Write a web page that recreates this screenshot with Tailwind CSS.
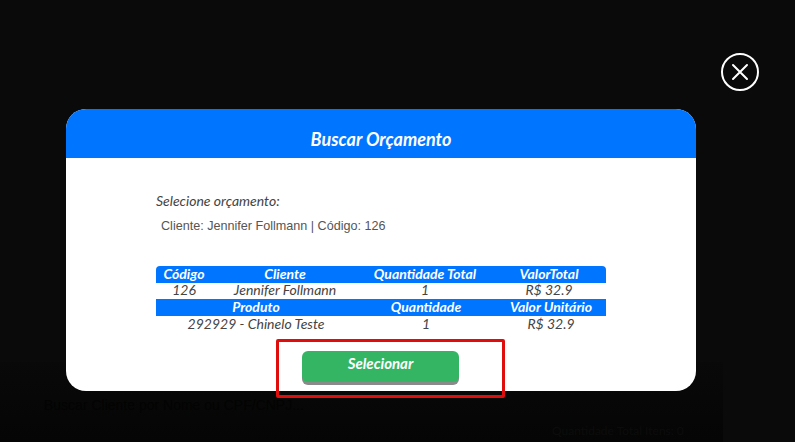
<!DOCTYPE html>
<html>

<head>
  <title>Buscar Orçamento</title>
  <script src="https://cdn.jsdelivr.net/npm/@tailwindcss/browser@4"></script>
</head>

<body class="bg-[#0a0a0a] font-['Lato',sans-serif]">
  <div class="relative w-[795px] h-[442px] overflow-hidden">
    <!-- page behind the overlay -->
    <div class="pt-[362px] h-full">
      <div class="relative h-[80px] w-[723px] bg-gradient-to-b from-[#090909] to-[#050505]">
        <p class="pl-[44px] pt-[34px] text-[14px] leading-[18px] text-[#030303] font-['Liberation_Sans',sans-serif]">Buscar Cliente por Nome ou CPF/CNPJ...</p>
        <p class="absolute left-[552px] top-[61px] text-[12px] leading-[16px] text-[#0c0c0c]">Quantidade Total Itens: 0</p>
      </div>
    </div>

    <!-- close button -->
    <button class="absolute left-[721px] top-[53px] w-[38px] h-[38px] rounded-full border-[2px] border-white flex items-center justify-center">
      <svg class="w-[20px] h-[20px]" viewBox="0 0 20 20" fill="none" stroke="white" stroke-width="2" stroke-linecap="round">
        <path d="M3 3l14 14M17 3L3 17"></path>
      </svg>
    </button>

    <!-- modal -->
    <div class="absolute left-[66px] top-[109px] w-[630px] h-[282px] bg-white rounded-[20px] overflow-hidden">
      <h2 class="h-[49px] bg-[#0075ff] flex items-center justify-center pt-[12px] text-white text-[18px] font-bold italic">Buscar Orçamento</h2>
      <div class="pt-[36px] px-[90px]">
        <p class="text-[14px] leading-[14px] italic text-[#444]">Selecione orçamento:</p>
        <p class="mt-[10px] pl-[5px] text-[12.6px] leading-[16px] text-[#555] font-['Liberation_Sans',sans-serif]">Cliente: Jennifer Follmann | Código: 126</p>

        <div class="mt-[32px] w-[450px] text-[14px] italic text-center text-[#444]">
          <div class="grid grid-cols-[56px_146px_134px_114px] h-[17px] leading-[15px] bg-[#0075ff] text-white font-bold rounded-t-[4px]">
            <span>Código</span>
            <span>Cliente</span>
            <span>Quantidade Total</span>
            <span>ValorTotal</span>
          </div>
          <div class="grid grid-cols-[56px_146px_134px_114px] h-[16px] leading-[14px]">
            <span>126</span>
            <span>Jennifer Follmann</span>
            <span>1</span>
            <span>R$ 32.9</span>
          </div>
          <div class="grid grid-cols-[200px_140px_110px] h-[17px] leading-[15px] bg-[#0075ff] text-white font-bold">
            <span>Produto</span>
            <span>Quantidade</span>
            <span>Valor Unitário</span>
          </div>
          <div class="grid grid-cols-[200px_140px_110px] h-[17px] leading-[15px]">
            <span>292929 - Chinelo Teste</span>
            <span>1</span>
            <span>R$ 32.9</span>
          </div>
        </div>

        <div class="mt-[18px] ml-[146px] w-[157px] h-[31px] bg-[#34b563] rounded-[6px] shadow-[0_3px_0_#8a8a8a] text-white text-[15px] font-bold italic text-center leading-[25px]">Selecionar</div>
      </div>
    </div>

    <!-- highlight box -->
    <div class="absolute left-[276px] top-[339px] w-[229px] h-[59px] border-[3px] border-[#e00d0d] rounded-[2px]"></div>
  </div>
</body>

</html>
